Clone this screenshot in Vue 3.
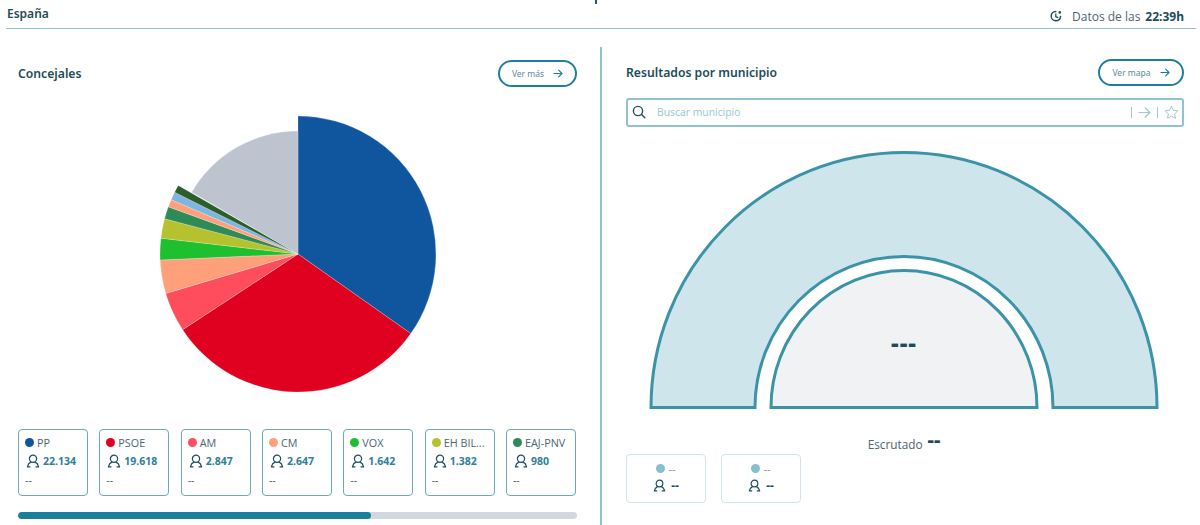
<script setup>
const cx = 140, cy = 140
function pt(r, a) {
  const t = (a * Math.PI) / 180
  return [cx + r * Math.sin(t), cy - r * Math.cos(t)]
}
function arc(r, a, b) {
  const [x1, y1] = pt(r, a)
  const [x2, y2] = pt(r, b)
  return `M${cx} ${cy}L${x1.toFixed(2)} ${y1.toFixed(2)}A${r} ${r} 0 ${b - a > 180 ? 1 : 0} 1 ${x2.toFixed(2)} ${y2.toFixed(2)}Z`
}
const slices = [
  { c: '#0f569e', a: 0, b: 125.2, r: 138 },
  { c: '#e0001f', a: 125.2, b: 236.7, r: 138 },
  { c: '#ff4d5e', a: 236.7, b: 253.4, r: 138 },
  { c: '#ffa07a', a: 253.4, b: 267.5, r: 138 },
  { c: '#1fc02f', a: 267.5, b: 276.6, r: 138 },
  { c: '#b5c22d', a: 276.6, b: 284.8, r: 138 },
  { c: '#2e8b57', a: 284.8, b: 290, r: 138 },
  { c: '#ffa07a', a: 290, b: 293.2, r: 138 },
  { c: '#7fb5e0', a: 293.2, b: 296.6, r: 138 },
  { c: '#2b5e2b', a: 296.6, b: 299.8, r: 138 },
  { c: '#bdc3cf', a: 300.2, b: 360, r: 123 },
].map((s) => ({ ...s, d: arc(s.r, s.a, s.b) }))

const parties = [
  { n: 'PP', c: '#0f569e', v: '22.134' },
  { n: 'PSOE', c: '#e0001f', v: '19.618' },
  { n: 'AM', c: '#ff4d5e', v: '2.847' },
  { n: 'CM', c: '#ffa07a', v: '2.647' },
  { n: 'VOX', c: '#1fc02f', v: '1.642' },
  { n: 'EH BIL...', c: '#b5c22d', v: '1.382' },
  { n: 'EAJ-PNV', c: '#2e8b57', v: '980' },
]
</script>

<template>
  <div class="page">
    <i class="cut-mark"></i>
    <header class="top">
      <span class="region">España</span>
      <span class="stamp">
        <svg class="clock" width="14" height="14" viewBox="0 0 14 14" fill="none">
          <path d="M11.6 7.4A4.7 4.7 0 1 1 6.8 2.4" stroke="#1f4f5c" stroke-width="1.5" stroke-linecap="round" />
          <path d="M6.8 4.8V7.6L8.8 8.6" stroke="#1f4f5c" stroke-width="1.2" stroke-linecap="round" />
          <circle cx="10.8" cy="3.4" r="1.3" fill="#1f4f5c" />
        </svg>
        <span class="stamp-label">Datos de las</span>
        <b>22:39h</b>
      </span>
    </header>

    <main class="cols">
      <section class="left">
        <div class="head">
          <h2>Concejales</h2>
          <button class="pill">
            Ver más
            <svg width="10" height="9" viewBox="0 0 11 10" fill="none"><path d="M1 5H10M6.2 1.2L10 5L6.2 8.8" stroke="#1f7f98" stroke-width="1.3" stroke-linecap="round" stroke-linejoin="round" /></svg>
          </button>
        </div>

        <div class="pie-wrap">
          <svg width="280" height="280" viewBox="0 0 280 280">
            <path v-for="s in slices" :key="s.a" :d="s.d" :fill="s.c" stroke="#fff" stroke-opacity=".45" stroke-width=".5" />
          </svg>
        </div>

        <div class="cards">
          <div v-for="p in parties" :key="p.n" class="card">
            <div class="name"><i class="dot" :style="{ background: p.c }"></i>{{ p.n }}</div>
            <div class="seats">
              <svg width="14" height="14" viewBox="0 0 14 14" fill="none"><circle cx="7" cy="4.8" r="3.6" stroke="#1f4f5c" stroke-width="1.25" /><path d="M1.4 12.8C2 10.2 3.4 8.8 4.9 8.2M12.6 12.8C12 10.2 10.6 8.8 9.1 8.2M1.4 12.8H4M12.6 12.8H10" stroke="#1f4f5c" stroke-width="1.25" stroke-linecap="round" /></svg>
              <b>{{ p.v }}</b>
            </div>
            <div class="dash">--</div>
          </div>
        </div>

        <div class="track"><div class="fill"></div></div>
      </section>

      <section class="right">
        <div class="head head-r">
          <h2>Resultados por municipio</h2>
          <button class="pill pill-r">
            Ver mapa
            <svg width="10" height="9" viewBox="0 0 11 10" fill="none"><path d="M1 5H10M6.2 1.2L10 5L6.2 8.8" stroke="#1f7f98" stroke-width="1.3" stroke-linecap="round" stroke-linejoin="round" /></svg>
          </button>
        </div>

        <div class="search">
          <svg width="14" height="14" viewBox="0 0 14 14" fill="none"><circle cx="6" cy="6" r="4.6" stroke="#1f4f5c" stroke-width="1.4" /><path d="M9.6 9.6L12.8 12.8" stroke="#1f4f5c" stroke-width="1.4" stroke-linecap="round" /></svg>
          <span class="placeholder">Buscar municipio</span>
          <span class="tools">
            <i class="bar"></i>
            <svg width="13" height="11" viewBox="0 0 13 11" fill="none"><path d="M1 5.5H12M7.2 1L12 5.5L7.2 10" stroke="#9cc9d4" stroke-width="1.2" stroke-linecap="round" stroke-linejoin="round" /></svg>
            <i class="bar"></i>
            <svg width="15" height="15" viewBox="0 0 15 15" fill="none"><path d="M7.5 1.2L9.4 5.3L13.9 5.8L10.6 8.9L11.5 13.4L7.5 11.1L3.5 13.4L4.4 8.9L1.1 5.8L5.6 5.3Z" stroke="#9cc9d4" stroke-width="1" stroke-linejoin="round" /></svg>
          </span>
        </div>

        <div class="gauge">
          <svg width="512" height="260" viewBox="0 0 512 260">
            <path d="M3 257.5A253 255 0 0 1 509 257.5H405A149 151 0 0 0 107 257.5Z" fill="#cfe5ec" stroke="#3b93a8" stroke-width="3" />
            <path d="M123 257.5A133 137 0 0 1 389 257.5Z" fill="#f0f2f4" stroke="#3b93a8" stroke-width="3" />
          </svg>
          <span class="gauge-value">---</span>
        </div>

        <div class="scrut"><span>Escrutado</span><b>--</b></div>

        <div class="mini-row">
          <div v-for="i in 2" :key="i" class="mini">
            <div class="mini-name"><i class="mini-dot"></i>--</div>
            <div class="mini-val">
              <svg width="13" height="13" viewBox="0 0 14 14" fill="none"><circle cx="7" cy="4.8" r="3.6" stroke="#1f4f5c" stroke-width="1.25" /><path d="M1.4 12.8C2 10.2 3.4 8.8 4.9 8.2M12.6 12.8C12 10.2 10.6 8.8 9.1 8.2M1.4 12.8H4M12.6 12.8H10" stroke="#1f4f5c" stroke-width="1.25" stroke-linecap="round" /></svg>
              <b>--</b>
            </div>
          </div>
        </div>
      </section>
    </main>
  </div>
</template>

<style>
html, body { margin: 0; background: #fff; overflow: hidden; }
</style>

<style scoped>
.page {
  position: relative;
  width: 1200px;
  height: 525px;
  overflow: hidden;
  font-family: "Noto Sans", "Open Sans", sans-serif;
  color: #1f4f5c;
  display: flex;
  flex-direction: column;
}
.cut-mark { position: absolute; left: 595px; top: 0; width: 2px; height: 4px; background: #1a5a7a; }
.top {
  height: 28px;
  margin: 0 4px 0 6px;
  padding: 0 1px;
  border-bottom: 1.5px solid #8fc3cf;
  display: flex;
  justify-content: space-between;
  align-items: center;
}
.region { font-size: 12px; font-weight: 600; color: #1d4b57; position: relative; top: -1px; }
.stamp { display: flex; align-items: center; font-size: 12px; color: #4b6670; padding-right: 11px; position: relative; top: 2px; }
.clock { margin-right: 9px; }
.stamp-label { font-family: "Open Sans", sans-serif; font-size: 12px; margin-right: 5px; }
.stamp b { font-weight: 700; color: #1d4b57; font-size: 12px; }
.cols { display: flex; flex: 1; min-height: 0; padding-top: 17.5px; }
.left { width: 600px; box-sizing: border-box; padding: 0 23px 0 18px; display: flex; flex-direction: column; }
.right { flex: 1; box-sizing: border-box; padding: 0 16px 0 24px; border-left: 2px solid #8fc3cf; display: flex; flex-direction: column; }
.head { display: flex; justify-content: space-between; align-items: center; height: 27px; margin-top: 13px; }
.head-r { margin-top: 12px; }
h2 { margin: 0; font-size: 12.2px; font-weight: 600; color: #1d4b57; }
.pill {
  width: 79px;
  height: 27px;
  box-sizing: border-box;
  border: 2px solid #1f7f98;
  border-radius: 14px;
  background: #fff;
  font-family: inherit;
  font-size: 8.5px;
  color: #5f8a96;
  display: flex;
  align-items: center;
  justify-content: center;
  gap: 9px;
  padding: 0;
}
.pill-r { width: 86px; }
.pie-wrap { display: flex; margin-top: 27px; padding-left: 139.5px; height: 280px; }
.cards { display: flex; justify-content: space-between; margin: 35px 1px 0 0; }
.card {
  width: 70px;
  height: 67px;
  box-sizing: border-box;
  border: 1px solid #6ea8b5;
  border-radius: 4px;
  padding: 5px 6px;
}
.name { display: flex; align-items: center; gap: 3px; font-family: "Open Sans", sans-serif; font-size: 10.8px; color: #4b6670; height: 16px; white-space: nowrap; }
.dot { width: 9px; height: 9px; border-radius: 50%; flex: none; }
.seats { display: flex; align-items: center; gap: 3px; height: 20px; padding-left: 1px; }
.seats b { font-size: 10.5px; font-weight: 700; color: #2f7e98; font-family: "Open Sans", sans-serif; }
.dash { font-size: 10.5px; color: #4b6670; margin-top: 2px; }
.track { height: 7px; margin-top: 16px; border-radius: 4px; background: #d3d8df; overflow: hidden; }
.fill { height: 100%; width: 353px; border-radius: 4px; background: #1a7f9a; }
.search {
  height: 29px;
  box-sizing: border-box;
  margin-top: 12px;
  border: 2px solid #8fc3cf;
  border-radius: 3px;
  display: flex;
  align-items: center;
  padding: 0 3px 0 4px;
}
.placeholder { margin-left: 11px; font-size: 10.3px; color: #9cc9d4; flex: 1; }
.tools { display: flex; align-items: center; gap: 6px; }
.bar { width: 1px; height: 11px; background: #9cc9d4; }
.gauge { position: relative; width: 512px; height: 260px; margin: 23px 0 0 22px; }
.gauge-value {
  position: absolute;
  left: 0;
  right: 0;
  top: 181px;
  text-align: center;
  font-size: 24px;
  font-weight: 800;
  line-height: 24px;
  color: #1d4b57;
  letter-spacing: 1px;
}
.scrut { display: flex; justify-content: center; align-items: center; gap: 5px; margin-top: 26px; padding-right: 2px; height: 16px; }
.scrut span { font-size: 11.8px; color: #4b6670; font-family: "Open Sans", sans-serif; }
.scrut b { font-size: 20px; font-weight: 800; color: #1d4b57; line-height: 12px; position: relative; top: -4px; }
.mini-row { display: flex; gap: 15px; margin-top: 2px; }
.mini {
  width: 80px;
  height: 49px;
  box-sizing: border-box;
  border: 1px solid #cfe5ec;
  border-radius: 4px;
  display: flex;
  flex-direction: column;
  align-items: center;
  padding-top: 6px;
}
.mini-name { display: flex; align-items: center; gap: 3px; font-size: 11px; color: #8a9aa2; height: 15px; }
.mini-dot { width: 9px; height: 9px; border-radius: 50%; background: #86bfce; }
.mini-val { display: flex; align-items: center; gap: 5px; height: 17px; margin-top: 1px; }
.mini-val b { font-size: 12px; font-weight: 700; color: #1d4b57; }
</style>
